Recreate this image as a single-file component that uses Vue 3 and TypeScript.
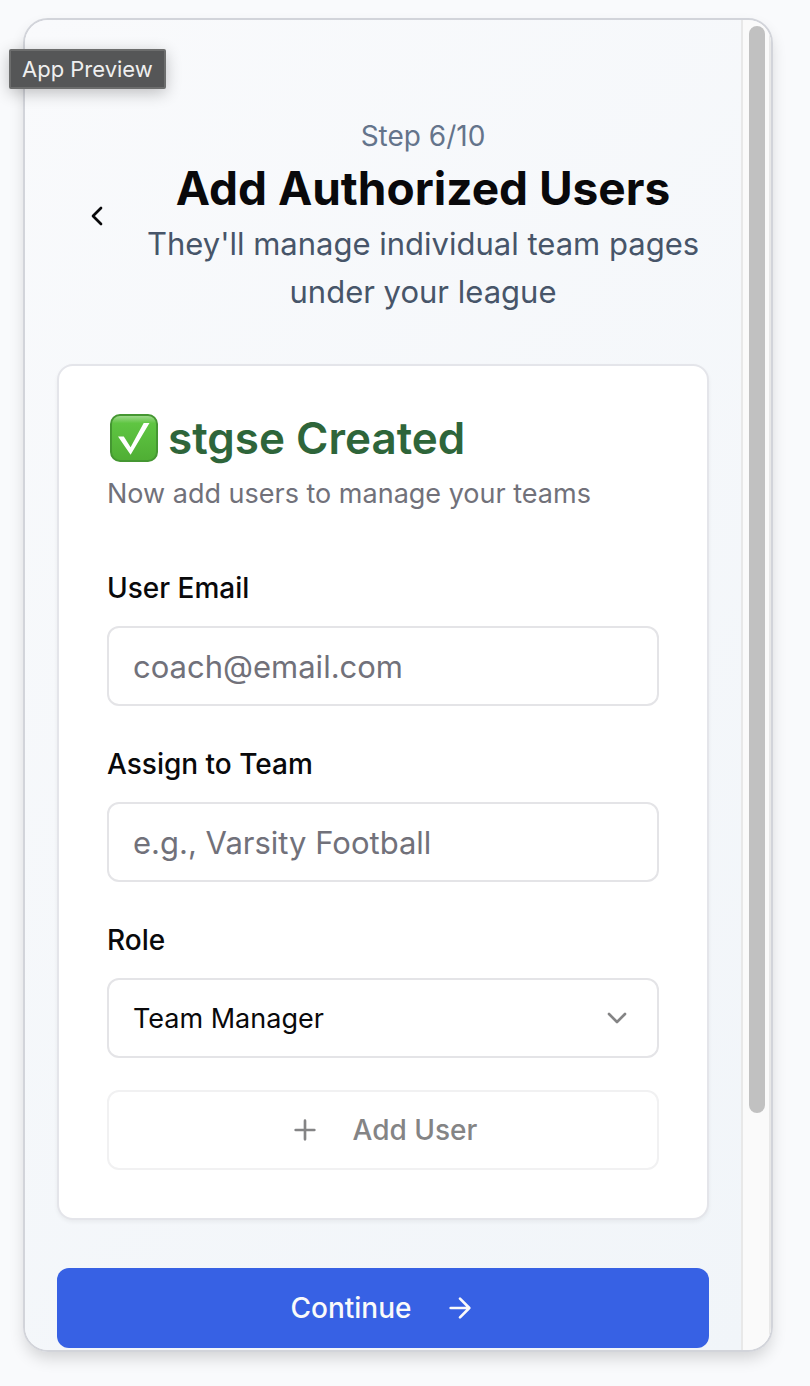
<script setup lang="ts">
import { ref } from 'vue'

const email = ref('')
const team = ref('')
const role = ref('Team Manager')
const roles: string[] = ['Team Manager', 'Coach', 'Assistant']
</script>

<template>
  <main class="stage">
    <span class="tag">App Preview</span>
    <div class="frame">
      <div class="screen">
        <header class="head">
          <button class="back" type="button" aria-label="Back">
            <svg class="icon" viewBox="0 0 24 24"><path d="m15 18-6-6 6-6" /></svg>
          </button>
          <div class="titles">
            <p class="step">Step 6/10</p>
            <h1>Add Authorized Users</h1>
            <p class="lead">They'll manage individual team pages under your league</p>
          </div>
        </header>

        <section class="card">
          <div class="card-head">
            <h2>
              <svg class="check" viewBox="0 0 48 48" aria-hidden="true">
                <defs>
                  <linearGradient id="tile" x1="0" y1="0" x2="0" y2="1">
                    <stop offset="0" stop-color="#a5dc94" />
                    <stop offset="0.18" stop-color="#5fc542" />
                    <stop offset="1" stop-color="#4fae34" />
                  </linearGradient>
                </defs>
                <rect x="1" y="1" width="46" height="46" rx="9" fill="url(#tile)" stroke="#459732" stroke-width="2" />
                <path d="M8 22.5h5.8l6.8 10.8L33.7 9H39.5L20.6 40.8Z" fill="#fff" />
              </svg>
              <span>stgse Created</span>
            </h2>
            <p class="sub">Now add users to manage your teams</p>
          </div>
          <form class="form" @submit.prevent>
            <div class="field">
              <label for="email">User Email</label>
              <input id="email" v-model="email" type="email" placeholder="coach@email.com" />
            </div>
            <div class="field">
              <label for="team">Assign to Team</label>
              <input id="team" v-model="team" type="text" placeholder="e.g., Varsity Football" />
            </div>
            <div class="field">
              <label for="role">Role</label>
              <div class="select">
                <select id="role" v-model="role">
                  <option v-for="r in roles" :key="r">{{ r }}</option>
                </select>
                <svg class="icon caret" viewBox="0 0 24 24"><path d="m6 9 6 6 6-6" /></svg>
              </div>
            </div>
            <button class="btn add" type="submit" disabled>
              <svg class="icon" viewBox="0 0 24 24"><path d="M5 12h14M12 5v14" /></svg>
              Add User
            </button>
          </form>
        </section>

        <button class="btn continue" type="button">
          Continue
          <svg class="icon" viewBox="0 0 24 24"><path d="M5 12h14M12 5l7 7-7 7" /></svg>
        </button>
      </div>
      <div class="track"><div class="thumb"></div></div>
    </div>
  </main>
</template>

<style>
body {
  background: #f9fafc;
}
</style>

<style scoped>
* {
  box-sizing: border-box;
  margin: 0;
}
.stage {
  position: relative;
  padding: 18px 37px 34px 23px;
  font-family: Inter, 'Liberation Sans', sans-serif;
  color: #09090b;
}
.tag {
  position: absolute;
  z-index: 1;
  left: 9px;
  top: 49px;
  padding: 0 11px;
  border: 2px solid #6c6d6d;
  border-radius: 2px;
  background: #555657;
  color: #efefef;
  font-size: 22px;
  line-height: 36px;
  box-shadow: 0 4px 16px rgba(0, 0, 0, 0.24);
}
.frame {
  display: flex;
  overflow: hidden;
  border: 2px solid #d2d4da;
  border-radius: 25px;
  box-shadow: 0 8px 16px -2px rgba(0, 0, 0, 0.16);
}
.screen {
  flex: 1;
  min-width: 0;
  display: flex;
  flex-direction: column;
  gap: 48px;
  padding: 96px 32px 2px;
  background: linear-gradient(135deg, #f9fafc, #f1f5f9);
}
.track {
  width: 30px;
  padding: 6px;
  border: solid #e8e8e8;
  border-width: 0 2px;
  background: #fafafa;
}
.thumb {
  width: 16px;
  height: 82.5%;
  border-radius: 8px;
  background: #c1c1c1;
}
.head {
  display: flex;
  align-items: center;
}
.back {
  width: 80px;
  height: 80px;
  display: grid;
  place-items: center;
  border: 0;
  padding: 0;
  background: none;
  color: inherit;
}
.icon {
  width: 32px;
  height: 32px;
  flex: none;
  fill: none;
  stroke: currentColor;
  stroke-width: 2;
  stroke-linecap: round;
  stroke-linejoin: round;
}
.titles {
  flex: 1;
  text-align: center;
}
.step {
  font-size: 28px;
  line-height: 40px;
  color: #64748b;
}
h1 {
  font-size: 46px;
  line-height: 64px;
  font-weight: 700;
}
.lead {
  font-size: 31px;
  line-height: 48px;
  color: #475569;
}
.card {
  display: flex;
  flex-direction: column;
  gap: 48px;
  padding: 48px;
  border: 2px solid #e4e5ea;
  border-radius: 16px;
  background: #fff;
  box-shadow: 0 2px 4px rgba(0, 0, 0, 0.05);
}
.card-head {
  display: grid;
  gap: 12px;
}
h2 {
  display: flex;
  align-items: center;
  gap: 10px;
  padding-left: 3px;
  font-size: 44px;
  line-height: 48px;
  font-weight: 600;
  color: #2e653a;
}
.check {
  width: 48px;
  height: 48px;
}
.sub {
  font-size: 27px;
  line-height: 40px;
  color: #71717a;
}
.form {
  display: grid;
  gap: 32px;
}
.field {
  display: grid;
  gap: 12px;
}
label {
  font-size: 28px;
  line-height: 52px;
  font-weight: 500;
}
input,
select {
  width: 100%;
  height: 80px;
  padding: 0 24px;
  border: 2px solid #e4e4e7;
  border-radius: 12px;
  background: #fff;
  font-family: inherit;
  font-size: 31px;
  color: #09090b;
}
input::placeholder {
  color: #71717a;
  opacity: 1;
}
.select {
  position: relative;
}
select {
  appearance: none;
  font-size: 27px;
}
.caret {
  position: absolute;
  right: 26px;
  top: 24px;
  color: #848485;
  pointer-events: none;
}
.btn {
  display: flex;
  align-items: center;
  justify-content: center;
  gap: 32px;
  height: 80px;
  border-radius: 12px;
  font-family: inherit;
  font-size: 28px;
  font-weight: 500;
}
.add {
  border: 2px solid #f1f1f2;
  background: #fff;
  color: #848485;
}
.continue {
  border: 0;
  background: #3761e4;
  color: #fafafa;
}
</style>
